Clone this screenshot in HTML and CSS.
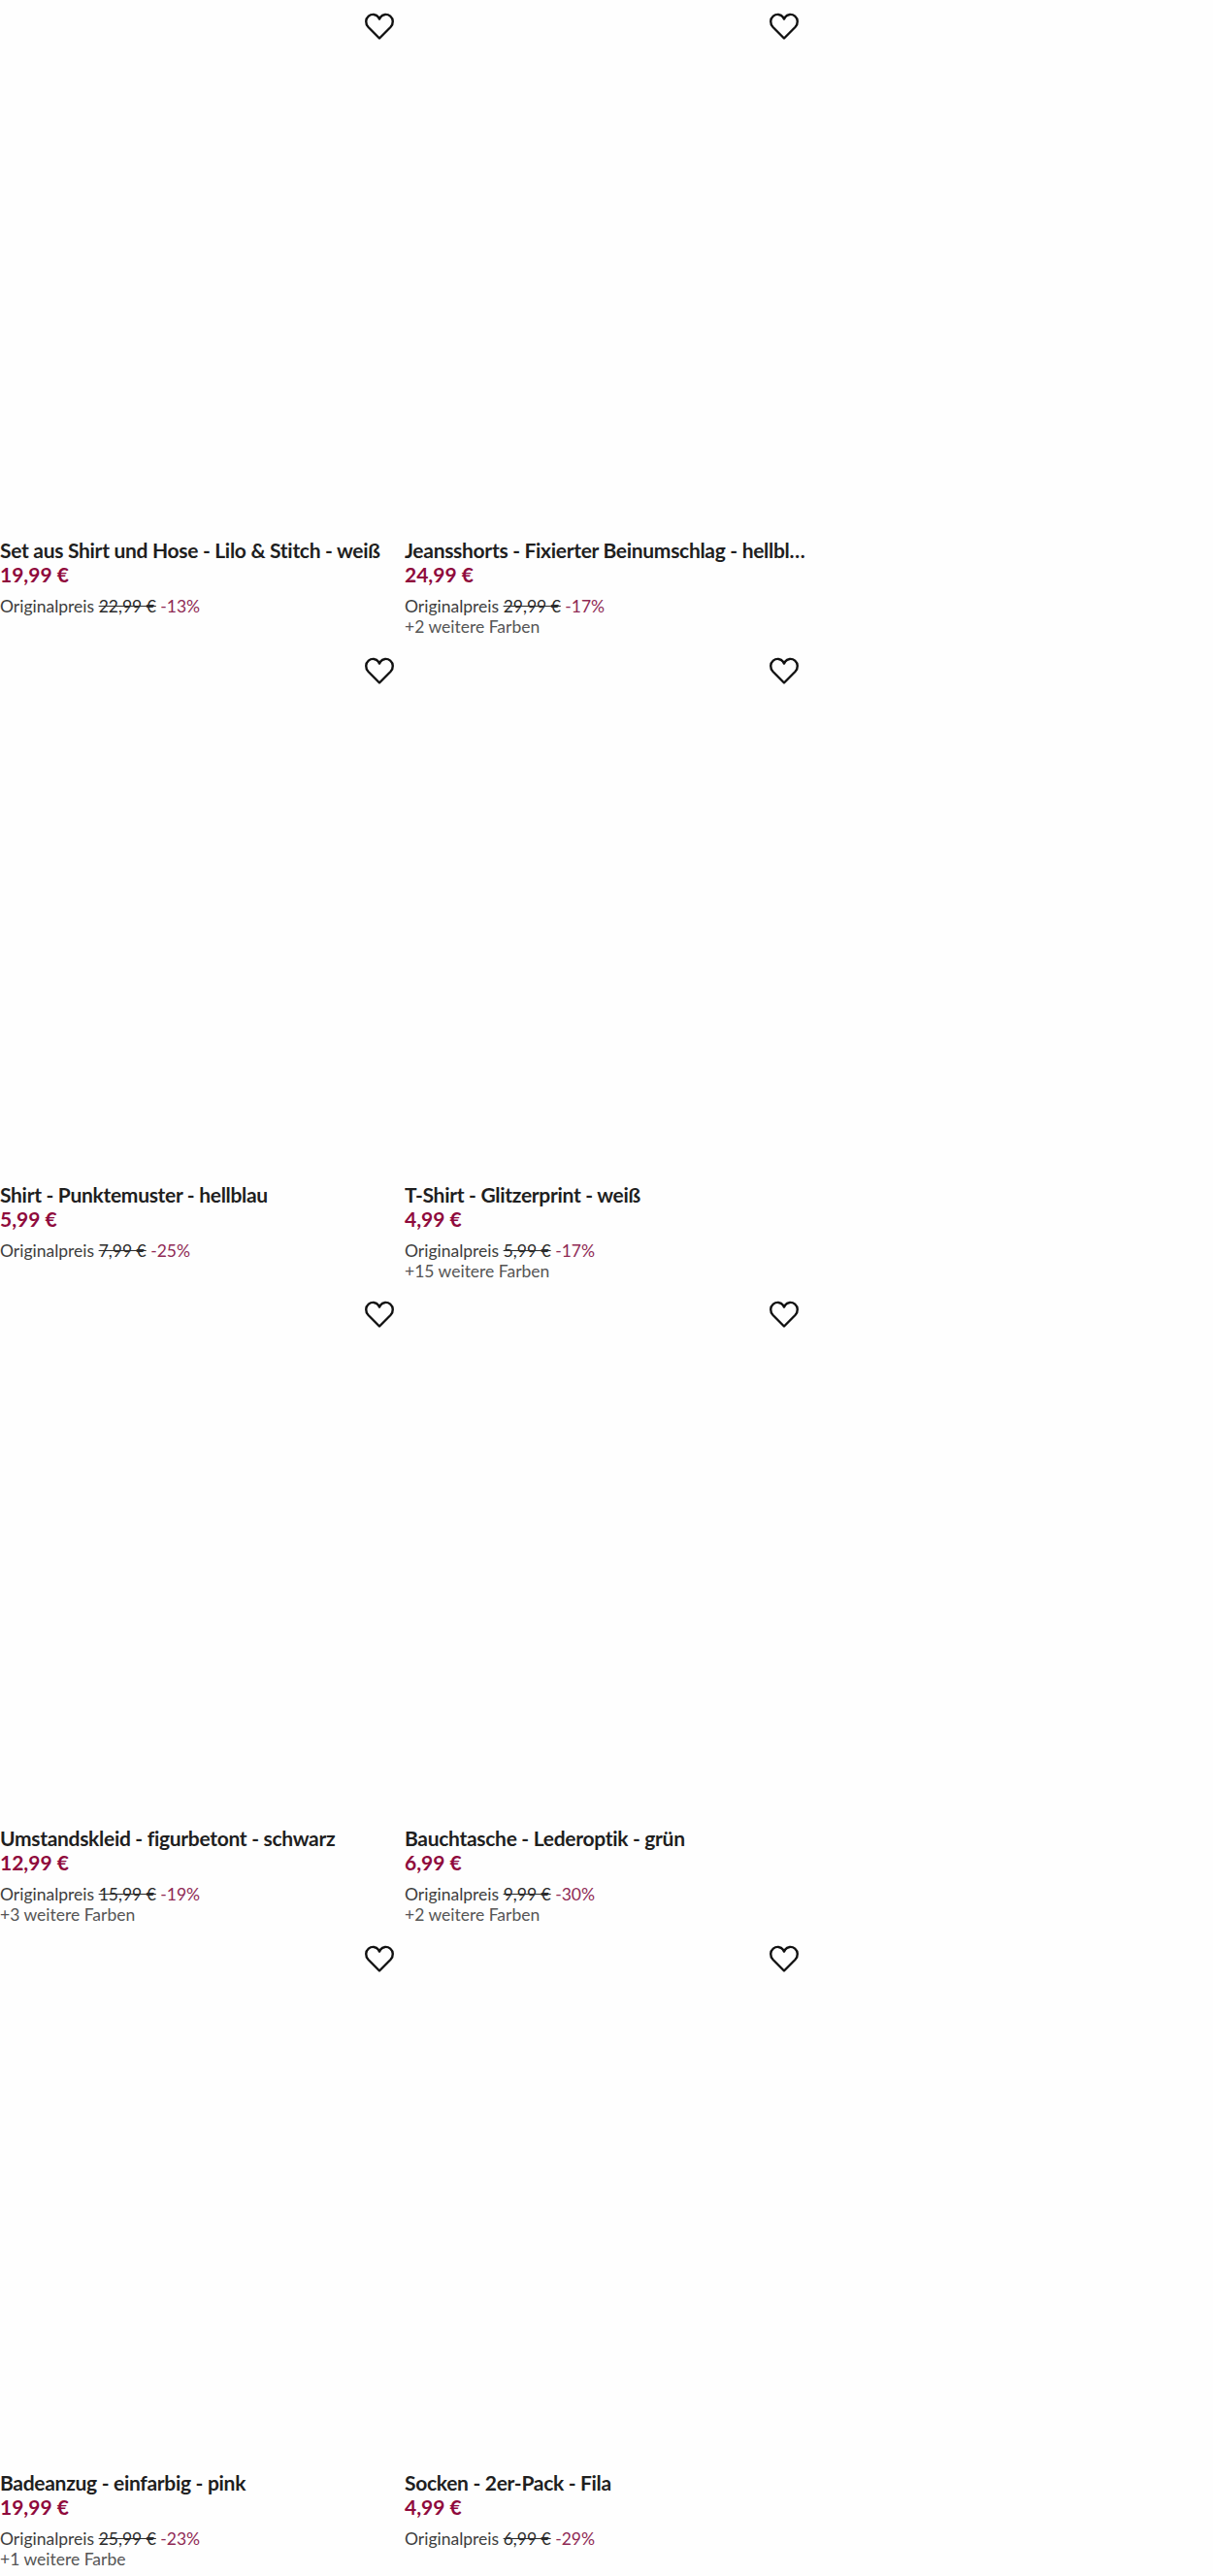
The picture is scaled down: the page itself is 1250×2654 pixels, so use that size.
FILE: index.html
```html
<!DOCTYPE html>
<html lang="de">
<head>
    <meta charset="UTF-8">
    <meta name="viewport" content="width=device-width, initial-scale=1.0">
    <title>Produkte</title>
    <link rel="stylesheet" href="styles.css">
</head>
<body>
    <svg class="icon-defs" width="0" height="0">
        <symbol id="heart" viewBox="0 0 32 32">
            <path d="M16 28.5 L4.6 17 C1.2 13.4 1.6 8.4 4.8 5.7 C8 3 12.6 3.4 15 6.8 L16 8.6 L17 6.8 C19.4 3.4 24 3 27.2 5.7 C30.4 8.4 30.8 13.4 27.4 17 Z" fill="none" stroke="currentColor" stroke-width="2.4" stroke-linejoin="round"/>
        </symbol>
    </svg>

    <div class="grid">
        <div class="card">
            <div class="image"><svg class="heart"><use href="#heart"/></svg></div>
            <div class="name">Set aus Shirt und Hose - Lilo &amp; Stitch - weiß</div>
            <div class="price">19,99 €</div>
            <div class="original">Originalpreis <s>22,99 €</s> <span class="discount">-13%</span></div>
        </div>
        <div class="card">
            <div class="image"><svg class="heart"><use href="#heart"/></svg></div>
            <div class="name">Jeansshorts - Fixierter Beinumschlag - hellblau</div>
            <div class="price">24,99 €</div>
            <div class="original">Originalpreis <s>29,99 €</s> <span class="discount">-17%</span></div>
            <div class="colors">+2 weitere Farben</div>
        </div>
        <div class="card">
            <div class="image"><svg class="heart"><use href="#heart"/></svg></div>
            <div class="name">Shirt - Punktemuster - hellblau</div>
            <div class="price">5,99 €</div>
            <div class="original">Originalpreis <s>7,99 €</s> <span class="discount">-25%</span></div>
        </div>
        <div class="card">
            <div class="image"><svg class="heart"><use href="#heart"/></svg></div>
            <div class="name">T-Shirt - Glitzerprint - weiß</div>
            <div class="price">4,99 €</div>
            <div class="original">Originalpreis <s>5,99 €</s> <span class="discount">-17%</span></div>
            <div class="colors">+15 weitere Farben</div>
        </div>
        <div class="card">
            <div class="image"><svg class="heart"><use href="#heart"/></svg></div>
            <div class="name">Umstandskleid - figurbetont - schwarz</div>
            <div class="price">12,99 €</div>
            <div class="original">Originalpreis <s>15,99 €</s> <span class="discount">-19%</span></div>
            <div class="colors">+3 weitere Farben</div>
        </div>
        <div class="card">
            <div class="image"><svg class="heart"><use href="#heart"/></svg></div>
            <div class="name">Bauchtasche - Lederoptik - grün</div>
            <div class="price">6,99 €</div>
            <div class="original">Originalpreis <s>9,99 €</s> <span class="discount">-30%</span></div>
            <div class="colors">+2 weitere Farben</div>
        </div>
        <div class="card">
            <div class="image"><svg class="heart"><use href="#heart"/></svg></div>
            <div class="name">Badeanzug - einfarbig - pink</div>
            <div class="price">19,99 €</div>
            <div class="original">Originalpreis <s>25,99 €</s> <span class="discount">-23%</span></div>
            <div class="colors">+1 weitere Farbe</div>
        </div>
        <div class="card">
            <div class="image"><svg class="heart"><use href="#heart"/></svg></div>
            <div class="name">Socken - 2er-Pack - Fila</div>
            <div class="price">4,99 €</div>
            <div class="original">Originalpreis <s>6,99 €</s> <span class="discount">-29%</span></div>
        </div>
    </div>
</body>
</html>
```

FILE: styles.css
```css
body {
    margin: 0;
    background: #fefefe;
    font-family: Lato, sans-serif;
    color: #1f1f1f;
}

.icon-defs {
    display: block;
    height: 0;
}

.grid {
    display: grid;
    grid-template-columns: 413px 413px;
    grid-auto-rows: 663.7px;
    column-gap: 4px;
}

.card {
    min-width: 0;
}

.image {
    height: 555px;
    box-sizing: border-box;
    padding: 11px 6px 0 0;
    display: flex;
    justify-content: flex-end;
    align-items: flex-start;
}

.heart {
    width: 32px;
    height: 32px;
    color: #111;
}

.name {
    font-size: 21px;
    font-weight: 700;
    line-height: 24px;
    letter-spacing: -0.3px;
    white-space: nowrap;
    overflow: hidden;
    text-overflow: ellipsis;
}

.price {
    font-size: 21px;
    font-weight: 700;
    line-height: 26px;
    color: #8f0a3c;
}

.original {
    margin-top: 9px;
    font-size: 17.5px;
    line-height: 21px;
    color: #3d3d3d;
}

.original s {
    color: #2b2b2b;
}

.discount {
    color: #8f2a55;
}

.colors {
    font-size: 17.5px;
    line-height: 21px;
    color: #555;
}
```
